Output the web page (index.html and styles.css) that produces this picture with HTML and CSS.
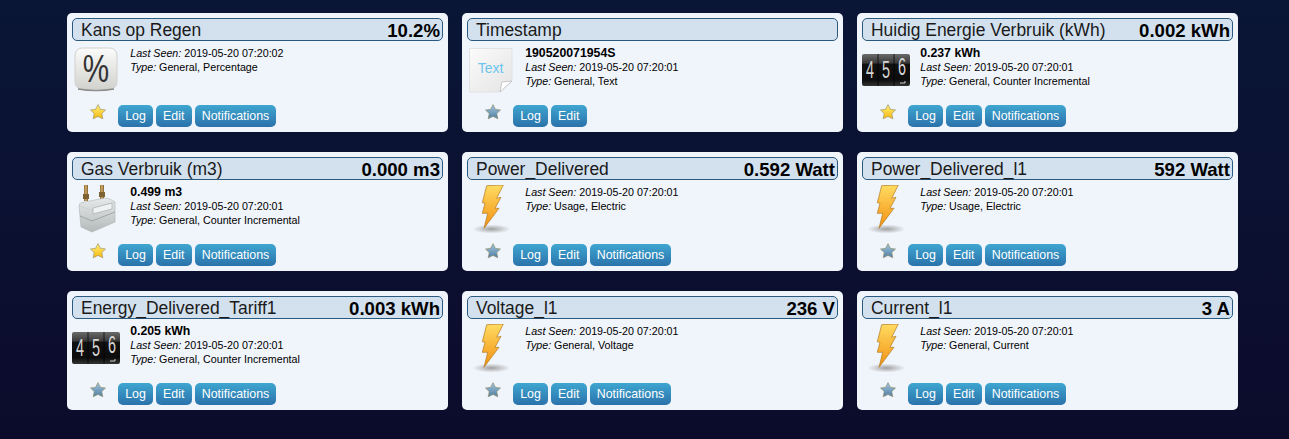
FILE: index.html
```html
<!DOCTYPE html>
<html lang="nl">
<head>
<meta charset="utf-8">
<title>Devices</title>
<link rel="stylesheet" href="styles.css">
</head>
<body>
<svg class="defs" width="0" height="0" aria-hidden="true">
  <defs>
    <linearGradient id="gStar" x1="0" y1="0" x2="0" y2="1"><stop offset="0" stop-color="#fff07a"/><stop offset="1" stop-color="#f8b90c"/></linearGradient>
    <linearGradient id="gGrey" x1="0" y1="0" x2="0" y2="1"><stop offset="0" stop-color="#a4c6de"/><stop offset="1" stop-color="#4f7fa3"/></linearGradient>
    <linearGradient id="gKey" x1="0" y1="0" x2="0" y2="1"><stop offset="0" stop-color="#fbfbfb"/><stop offset="1" stop-color="#d2d2ce"/></linearGradient>
    <linearGradient id="gPage" x1="0" y1="0" x2="1" y2="1"><stop offset="0" stop-color="#fbfbfb"/><stop offset="1" stop-color="#e4e4e4"/></linearGradient>
    <linearGradient id="gBolt" x1="0" y1="0" x2="0" y2="1"><stop offset="0" stop-color="#ffdc62"/><stop offset="1" stop-color="#f28f10"/></linearGradient>
    <linearGradient id="gDial" x1="0" y1="0" x2="0" y2="1"><stop offset="0" stop-color="#6a6a6a"/><stop offset=".28" stop-color="#3a3a3a"/><stop offset=".32" stop-color="#111"/><stop offset=".8" stop-color="#0c0c0c"/><stop offset="1" stop-color="#333"/></linearGradient>
    <linearGradient id="gGas" x1="0" y1="0" x2="0" y2="1"><stop offset="0" stop-color="#e6e9e9"/><stop offset="1" stop-color="#b4b9ba"/></linearGradient>
    <linearGradient id="gBrass" x1="0" y1="0" x2="1" y2="0"><stop offset="0" stop-color="#8b6a35"/><stop offset=".5" stop-color="#d2ad6a"/><stop offset="1" stop-color="#7a5c2e"/></linearGradient>
    <radialGradient id="gShadow"><stop offset="0" stop-color="#a0a0a0"/><stop offset="1" stop-color="#a0a0a0" stop-opacity="0"/></radialGradient>
    <symbol id="star" viewBox="0 0 16 16"><path d="M8 .6L10.400 5.300L15.500 6L11.800 9.600L12.800 14.800L8 12.400L3.200 14.800L4.200 9.600L.5 6L5.600 5.300Z" fill="inherit" stroke="#8f8a60" stroke-width=".6" stroke-linejoin="round"/></symbol>
    <symbol id="bolt" viewBox="0 0 48 50">
      <ellipse cx="24.500" cy="44" rx="19" ry="4.500" fill="url(#gShadow)"/>
      <path d="M19.700 .7L36.300 0L29.700 13.300L34 12.300L28 23.300L32 23.300L17 43.300L20.700 28.300L15.300 28.300L18 18.300L15.300 17.700Z" fill="url(#gBolt)" stroke="#b27a20" stroke-width=".7" stroke-linejoin="round"/>
    </symbol>
    <symbol id="meter" viewBox="0 0 48 50">
      <rect x="0" y="8" width="48" height="32" rx="2" fill="url(#gDial)"/>
      <path d="M16 8V40M32 8V40" stroke="#000" stroke-width=".7"/>
      <text class="dial" transform="translate(8 32) scale(.6 1)">4</text>
      <text class="dial" transform="translate(24 32) scale(.6 1)">5</text>
      <text class="dial" transform="translate(40 29) scale(.6 1)">6</text>
      <path d="M38 37h5v-2" fill="none" stroke="#ccc"/>
    </symbol>
    <symbol id="percent" viewBox="0 0 48 50">
      <rect x="3" y="2" width="42" height="41" rx="7" fill="url(#gKey)" stroke="#d0d0cc"/>
      <path d="M6 43q18 3 36 0" fill="none" stroke="#8c8c88" stroke-width="1.500"/>
      <text class="pct" transform="translate(24 36) scale(.78 1)">%</text>
    </symbol>
    <symbol id="textfile" viewBox="0 0 48 50">
      <path d="M2.500 2.500H45V35L33 46H2.500Z" fill="url(#gPage)" stroke="#e2e2e2"/>
      <path d="M45 35L33 46L35 36Z" fill="#fff" stroke="#b5b5b5" stroke-width=".7"/>
      <text class="ftxt" x="23.500" y="27">Text</text>
    </symbol>
    <symbol id="gas" viewBox="0 0 48 50">
      <rect x="12" y="0" width="4" height="16" fill="url(#gBrass)"/>
      <rect x="28" y="0" width="4" height="14" fill="url(#gBrass)"/>
      <rect x="11" y="9" width="6" height="5" fill="#7f6234"/>
      <rect x="27" y="7" width="6" height="5" fill="#7f6234"/>
      <path d="M7 21Q7 18 10 17.500L33 13Q36 13 40 15L43 17V37L20 47L9 42Z" fill="url(#gGas)" stroke="#a5aaab" stroke-width=".5"/>
      <path d="M7 21L19 25L43 17" fill="none" stroke="#c4c8c9" stroke-width=".6"/>
      <path d="M21 23L40 18V24L21 29Z" fill="#f0f1f1" stroke="#8f9496" stroke-width=".5"/>
      <path d="M8 31L20 36L43 27" fill="none" stroke="#8f9496" stroke-width=".7"/>
    </symbol>
  </defs>
</svg>

<main class="grid">
  <article class="card">
    <header class="title"><span>Kans op Regen</span><b class="value">10.2%</b></header>
    <div class="body">
      <svg class="icon"><use href="#percent"/></svg>
      <div class="info">
        <p><i>Last Seen:</i> 2019-05-20 07:20:02</p>
        <p><i>Type:</i> General, Percentage</p>
      </div>
    </div>
    <footer class="actions">
      <svg class="star on"><use href="#star"/></svg>
      <a class="btn">Log</a><a class="btn">Edit</a><a class="btn">Notifications</a>
    </footer>
  </article>

  <article class="card">
    <header class="title"><span>Timestamp</span></header>
    <div class="body">
      <svg class="icon"><use href="#textfile"/></svg>
      <div class="info">
        <p class="data">190520071954S</p>
        <p><i>Last Seen:</i> 2019-05-20 07:20:01</p>
        <p><i>Type:</i> General, Text</p>
      </div>
    </div>
    <footer class="actions">
      <svg class="star"><use href="#star"/></svg>
      <a class="btn">Log</a><a class="btn">Edit</a>
    </footer>
  </article>

  <article class="card">
    <header class="title"><span>Huidig Energie Verbruik (kWh)</span><b class="value">0.002 kWh</b></header>
    <div class="body">
      <svg class="icon"><use href="#meter"/></svg>
      <div class="info">
        <p class="data">0.237 kWh</p>
        <p><i>Last Seen:</i> 2019-05-20 07:20:01</p>
        <p><i>Type:</i> General, Counter Incremental</p>
      </div>
    </div>
    <footer class="actions">
      <svg class="star on"><use href="#star"/></svg>
      <a class="btn">Log</a><a class="btn">Edit</a><a class="btn">Notifications</a>
    </footer>
  </article>

  <article class="card">
    <header class="title"><span>Gas Verbruik (m3)</span><b class="value">0.000 m3</b></header>
    <div class="body">
      <svg class="icon"><use href="#gas"/></svg>
      <div class="info">
        <p class="data">0.499 m3</p>
        <p><i>Last Seen:</i> 2019-05-20 07:20:01</p>
        <p><i>Type:</i> General, Counter Incremental</p>
      </div>
    </div>
    <footer class="actions">
      <svg class="star on"><use href="#star"/></svg>
      <a class="btn">Log</a><a class="btn">Edit</a><a class="btn">Notifications</a>
    </footer>
  </article>

  <article class="card">
    <header class="title"><span>Power_Delivered</span><b class="value">0.592 Watt</b></header>
    <div class="body">
      <svg class="icon"><use href="#bolt"/></svg>
      <div class="info">
        <p><i>Last Seen:</i> 2019-05-20 07:20:01</p>
        <p><i>Type:</i> Usage, Electric</p>
      </div>
    </div>
    <footer class="actions">
      <svg class="star"><use href="#star"/></svg>
      <a class="btn">Log</a><a class="btn">Edit</a><a class="btn">Notifications</a>
    </footer>
  </article>

  <article class="card">
    <header class="title"><span>Power_Delivered_l1</span><b class="value">592 Watt</b></header>
    <div class="body">
      <svg class="icon"><use href="#bolt"/></svg>
      <div class="info">
        <p><i>Last Seen:</i> 2019-05-20 07:20:01</p>
        <p><i>Type:</i> Usage, Electric</p>
      </div>
    </div>
    <footer class="actions">
      <svg class="star"><use href="#star"/></svg>
      <a class="btn">Log</a><a class="btn">Edit</a><a class="btn">Notifications</a>
    </footer>
  </article>

  <article class="card">
    <header class="title"><span>Energy_Delivered_Tariff1</span><b class="value">0.003 kWh</b></header>
    <div class="body">
      <svg class="icon"><use href="#meter"/></svg>
      <div class="info">
        <p class="data">0.205 kWh</p>
        <p><i>Last Seen:</i> 2019-05-20 07:20:01</p>
        <p><i>Type:</i> General, Counter Incremental</p>
      </div>
    </div>
    <footer class="actions">
      <svg class="star"><use href="#star"/></svg>
      <a class="btn">Log</a><a class="btn">Edit</a><a class="btn">Notifications</a>
    </footer>
  </article>

  <article class="card">
    <header class="title"><span>Voltage_l1</span><b class="value">236 V</b></header>
    <div class="body">
      <svg class="icon"><use href="#bolt"/></svg>
      <div class="info">
        <p><i>Last Seen:</i> 2019-05-20 07:20:01</p>
        <p><i>Type:</i> General, Voltage</p>
      </div>
    </div>
    <footer class="actions">
      <svg class="star"><use href="#star"/></svg>
      <a class="btn">Log</a><a class="btn">Edit</a><a class="btn">Notifications</a>
    </footer>
  </article>

  <article class="card">
    <header class="title"><span>Current_l1</span><b class="value">3 A</b></header>
    <div class="body">
      <svg class="icon"><use href="#bolt"/></svg>
      <div class="info">
        <p><i>Last Seen:</i> 2019-05-20 07:20:01</p>
        <p><i>Type:</i> General, Current</p>
      </div>
    </div>
    <footer class="actions">
      <svg class="star"><use href="#star"/></svg>
      <a class="btn">Log</a><a class="btn">Edit</a><a class="btn">Notifications</a>
    </footer>
  </article>
</main>
</body>
</html>
```
FILE: styles.css
```css
* { box-sizing: border-box; }
html, body { height: 100%; }
body {
  margin: 0;
  padding: 13px 0 0 67px;
  overflow: hidden;
  background: linear-gradient(180deg, #0a1636 0%, #0c0b2c 100%);
  font-family: "Liberation Sans", Arial, sans-serif;
  color: #000;
}
.defs { display: block; height: 0; }
.grid {
  display: grid;
  grid-template-columns: repeat(3, 381px);
  grid-auto-rows: 119px;
  column-gap: 14px;
  row-gap: 20px;
}
.card {
  display: flex;
  flex-direction: column;
  padding: 5px;
  background: #f0f4fb;
  border-radius: 5px;
}
.title {
  display: flex;
  justify-content: space-between;
  align-items: center;
  height: 23px;
  padding: 2px 2px 0 8px;
  background: #d3e1ef;
  border: 1px solid #2b5a80;
  border-radius: 5px;
  font-size: 17.45px;
  color: #1a1a1a;
}
.value {
  font-size: 18.6px;
  color: #000;
}
.body {
  display: flex;
  height: 50px;
  margin-top: 5px;
}
.icon {
  flex: none;
  width: 48px;
  height: 50px;
}
.info {
  margin-left: 10.2px;
  font-size: 10.7px;
  line-height: 14px;
}
.info p { margin: 0; }
.data { font-weight: bold; font-size: 12.3px; }
.actions {
  display: flex;
  align-items: flex-start;
  height: 22px;
  margin-top: 9px;
  padding-left: 18px;
}
.star {
  flex: none;
  width: 16px;
  height: 16px;
  margin: -1px 12px 0 0;
  fill: url(#gGrey);
}
.star.on { fill: url(#gStar); }
.btn {
  display: block;
  height: 22px;
  margin-right: 3px;
  padding: 0 7.15px;
  background: linear-gradient(180deg, #3fa6d0 0%, #2a72ab 100%);
  border-radius: 5px;
  color: #fff;
  font-size: 12.4px;
  line-height: 22px;
}
.dial {
  font-family: "Liberation Sans", sans-serif;
  font-size: 24px;
  text-anchor: middle;
  fill: #d5d5d5;
}
.pct {
  font-family: "Liberation Sans", sans-serif;
  font-size: 38px;
  text-anchor: middle;
  fill: #333;
}
.ftxt {
  font-family: "Liberation Sans", sans-serif;
  font-size: 14px;
  text-anchor: middle;
  fill: #6cc5ee;
}
```
